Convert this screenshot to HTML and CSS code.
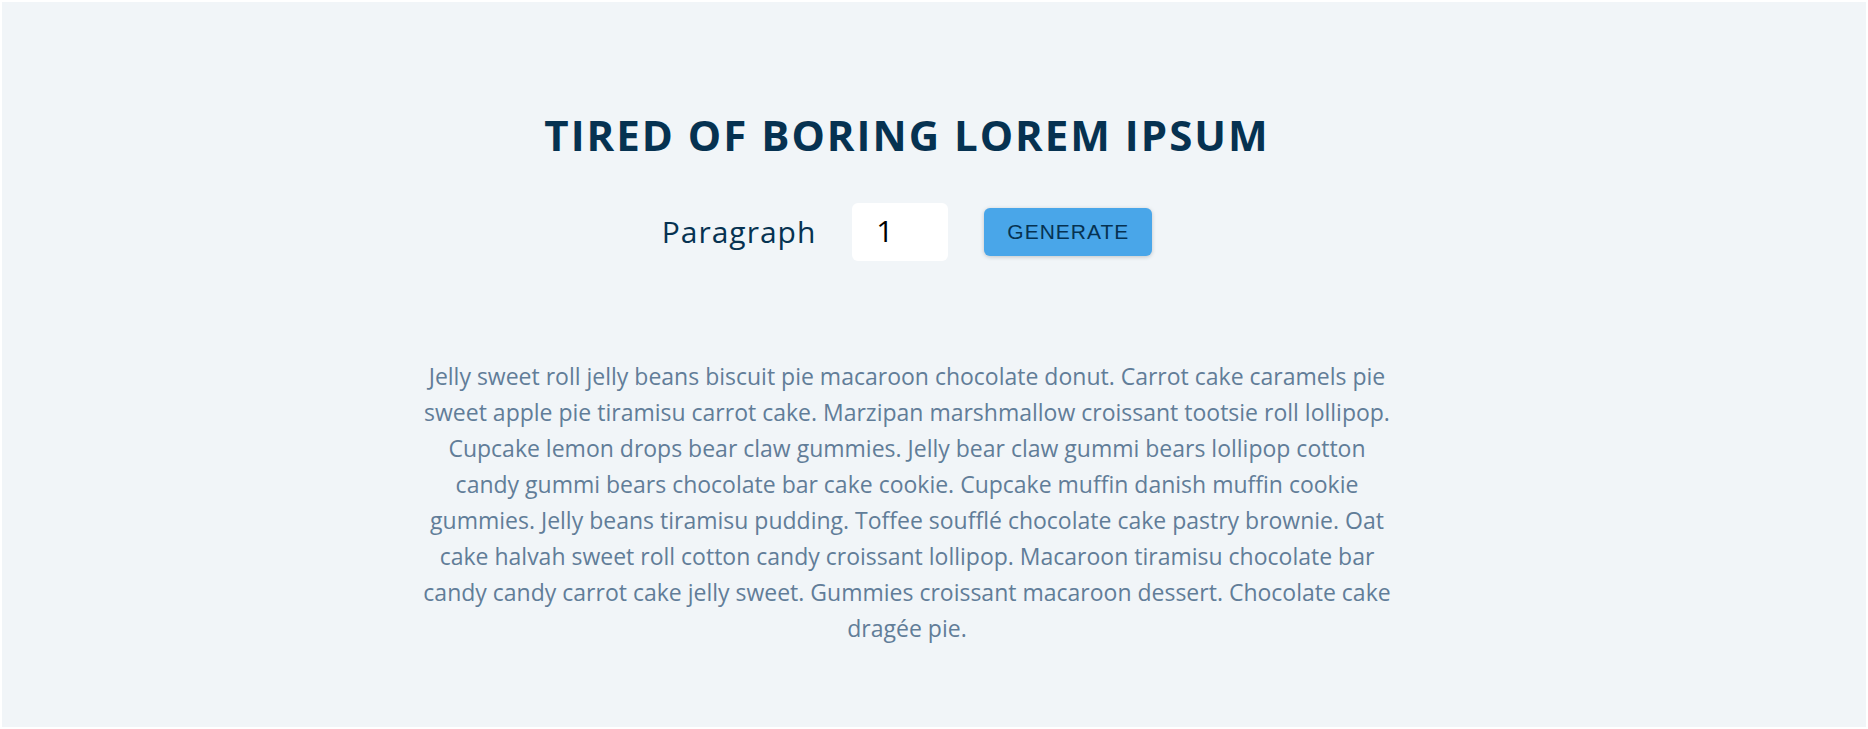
FILE: index.html
```html
<!DOCTYPE html>
<html lang="en">
<head>
<meta charset="utf-8">
<meta name="viewport" content="width=device-width, initial-scale=1">
<title>Lorem Ipsum Generator</title>
<link rel="stylesheet" href="styles.css">
</head>
<body>
<main class="page">
  <section class="generator">
    <h1 class="title">Tired of boring lorem ipsum</h1>
    <form class="lorem-form">
      <label class="label" for="amount">Paragraph</label>
      <input class="amount" type="number" id="amount" name="amount" min="1" max="8" value="1">
      <button class="btn" type="submit">generate</button>
    </form>
    <article class="lorem-text">
      <p class="result">Jelly sweet roll jelly beans biscuit pie macaroon chocolate donut. Carrot cake caramels pie sweet apple pie tiramisu carrot cake. Marzipan marshmallow croissant tootsie roll lollipop. Cupcake lemon drops bear claw gummies. Jelly bear claw gummi bears lollipop cotton candy gummi bears chocolate bar cake cookie. Cupcake muffin danish muffin cookie gummies. Jelly beans tiramisu pudding. Toffee soufflé chocolate cake pastry brownie. Oat cake halvah sweet roll cotton candy croissant lollipop. Macaroon tiramisu chocolate bar candy candy carrot cake jelly sweet. Gummies croissant macaroon dessert. Chocolate cake dragée pie.</p>
    </article>
  </section>
</main>
</body>
</html>
```

FILE: styles.css
```css
* {
  box-sizing: border-box;
  margin: 0;
  padding: 0;
}

body {
  background: #fff;
  font-family: "Segoe UI", "Open Sans", "Noto Sans", sans-serif;
  color: #102a42;
}

.page {
  min-height: 100vh;
  padding: 103px 54px 72px 0;
  background: #f1f5f8;
  border: 2px solid #fff;
}

.generator {
  max-width: 976px;
  margin: 0 auto;
  text-align: center;
}

.title {
  font-size: 42px;
  line-height: 60px;
  font-weight: 700;
  letter-spacing: 2px;
  text-transform: uppercase;
  color: #063251;
}

.lorem-form {
  display: flex;
  justify-content: center;
  align-items: center;
  gap: 36px;
  margin: 38px 0 97px;
}

.label {
  font-size: 30px;
  line-height: 48px;
  letter-spacing: 1px;
  color: #063251;
}

.amount {
  width: 96px;
  height: 58px;
  padding: 0 24px 4px;
  border: 0;
  border-radius: 6px;
  background: #fff;
  color: #000;
  font-family: "Segoe UI", "Open Sans", "Noto Sans", sans-serif;
  font-size: 30px;
  appearance: textfield;
}

.amount::-webkit-inner-spin-button {
  display: none;
}

.btn {
  padding: 12px 23px;
  border: 0;
  border-radius: 6px;
  background: #49a6e9;
  color: #063251;
  font-family: "Liberation Sans", Arial, sans-serif;
  font-size: 21px;
  line-height: 24px;
  letter-spacing: 1px;
  text-transform: uppercase;
  box-shadow: 0 1px 4px rgba(0, 0, 0, 0.2);
  cursor: pointer;
}

.result {
  font-size: 23px;
  line-height: 36px;
  color: #617d98;
}
```
